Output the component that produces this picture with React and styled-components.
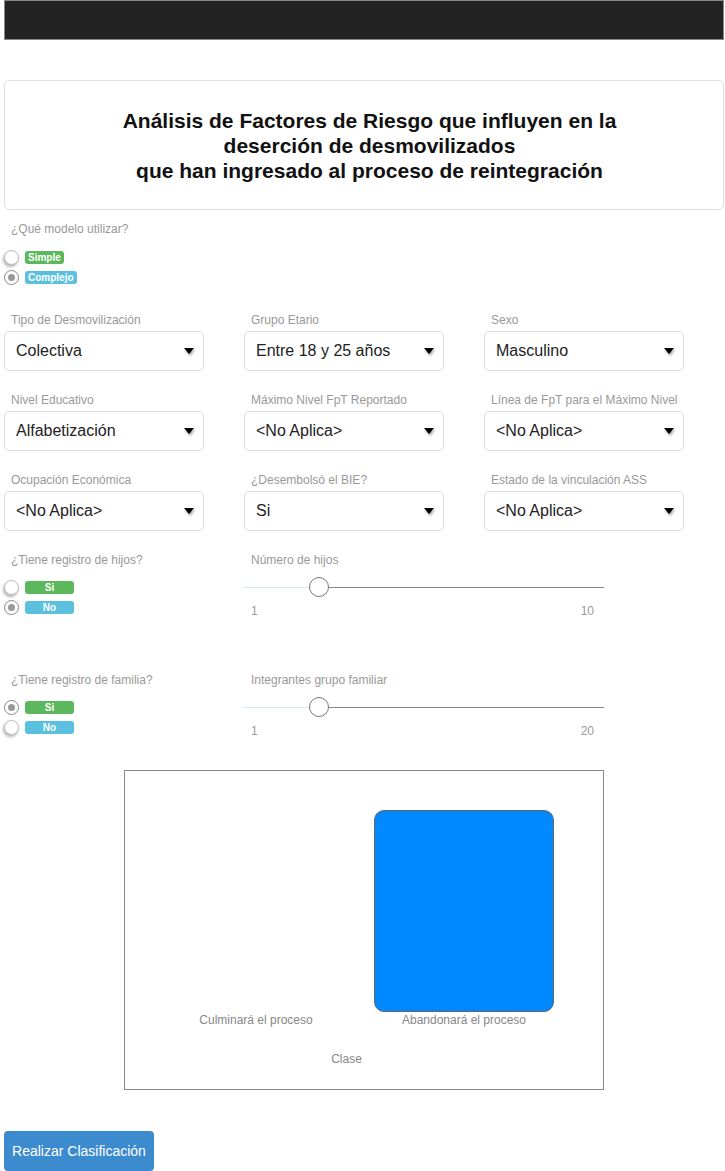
import React from "react";
import styled, { createGlobalStyle } from "styled-components";

const GlobalStyle = createGlobalStyle`
  body {
    margin: 0;
    background: #fff;
    font-family: "Liberation Sans", Arial, sans-serif;
  }
`;

const Page = styled.div`
  width: 720px;
  padding: 0 1px 0 4px;
`;

const TopBar = styled.header`
  height: 38px;
  background: #222;
  border: 1px solid #888;
`;

const TitleCard = styled.section`
  margin-top: 40px;
  height: 128px;
  border: 1px solid #ddd;
  border-radius: 5px;
  display: flex;
  align-items: center;
  justify-content: center;
  padding-left: 11px;
`;

const Title = styled.h1`
  margin: 0;
  font-size: 21px;
  line-height: 25px;
  font-weight: bold;
  text-align: center;
  color: #111;
`;

const Label = styled.div`
  font-size: 12px;
  line-height: 14px;
  color: #999;
  padding-left: 7px;
  white-space: nowrap;
`;

const ModelBlock = styled.div`
  margin-top: 12px;
`;

const RadioList = styled.div`
  display: flex;
  flex-direction: column;
  gap: 6px;
  margin-top: ${props => props.top || 13}px;
`;

const RadioRow = styled.label`
  display: flex;
  align-items: center;
  gap: 6px;
  height: 14px;
`;

const RadioDot = styled.span`
  width: 13px;
  height: 13px;
  border-radius: 50%;
  border: 1px solid ${props => (props.checked ? "#888" : "#bbb")};
  background: #fff;
  box-shadow: ${props => (props.checked ? "none" : "-1px 2px 3px rgba(0,0,0,0.3)")};
  display: flex;
  align-items: center;
  justify-content: center;
  flex-shrink: 0;

  &::after {
    content: "";
    width: 7px;
    height: 7px;
    border-radius: 50%;
    background: ${props => (props.checked ? "#999" : "transparent")};
  }
`;

const Badge = styled.span`
  display: inline-block;
  background: ${props => (props.kind === "info" ? "#5bc0de" : "#5cb85c")};
  color: #fff;
  font-size: 10px;
  font-weight: bold;
  line-height: 13px;
  height: 13px;
  border-radius: 3px;
  padding: 0 3px;
  text-align: center;
  min-width: ${props => (props.wide ? "43px" : "0")};
`;

const SelectGrid = styled.div`
  display: grid;
  grid-template-columns: repeat(3, 200px);
  column-gap: 40px;
  row-gap: 22px;
  margin-top: 29px;
`;

const Field = styled.div`
  display: flex;
  flex-direction: column;
  gap: 4px;
`;

const SelectBox = styled.div`
  height: 38px;
  border: 1px solid #ddd;
  border-radius: 5px;
  display: flex;
  align-items: center;
  justify-content: space-between;
  padding: 0 9px 0 11px;
  font-size: 16px;
  color: #222;
`;

const Caret = styled.span`
  width: 0;
  height: 0;
  border-left: 5px solid transparent;
  border-right: 5px solid transparent;
  border-top: 6px solid #000;
  filter: drop-shadow(1px 2px 1px rgba(0, 0, 0, 0.35));
`;

const OptionRow = styled.div`
  display: grid;
  grid-template-columns: 200px 360px;
  column-gap: 40px;
  margin-top: ${props => props.top}px;
  height: ${props => props.height}px;
`;

const SliderWrap = styled.div`
  display: flex;
  flex-direction: column;
`;

const Track = styled.div`
  height: 20px;
  margin-top: 10px;
  display: flex;
  align-items: center;
`;

const TrackFill = styled.span`
  width: ${props => props.width}px;
  height: 1px;
  background: #d4e6f7;
`;

const TrackRest = styled.span`
  flex: 1;
  height: 1px;
  background: #888;
`;

const Thumb = styled.span`
  width: 18px;
  height: 18px;
  border-radius: 50%;
  border: 1px solid #777;
  background: #fff;
  flex-shrink: 0;
`;

const Ticks = styled.div`
  display: flex;
  justify-content: space-between;
  font-size: 12px;
  line-height: 14px;
  color: #999;
  padding: 0 10px 0 7px;
  margin-top: 7px;
`;

const Chart = styled.div`
  margin: 11px 0 0 120px;
  width: 480px;
  height: 320px;
  border: 1px solid #888;
  display: flex;
  flex-direction: column;
  padding-top: 39px;
  box-sizing: border-box;
`;

const Plot = styled.div`
  display: grid;
  grid-template-columns: 208px 208px;
  padding-left: 27px;
  height: 200px;
  align-items: end;
`;

const Bar = styled.div`
  justify-self: center;
  width: 178px;
  height: ${props => props.height}px;
  background: #0088ff;
  border: 1px solid #666;
  border-radius: 10px;
`;

const AxisLabels = styled.div`
  display: grid;
  grid-template-columns: 208px 208px;
  padding-left: 27px;
  margin-top: 3px;
  font-size: 12px;
  line-height: 14px;
  color: #888;
  text-align: center;
`;

const AxisTitle = styled.div`
  margin-top: 25px;
  font-size: 12px;
  line-height: 14px;
  color: #888;
  text-align: center;
  padding-right: 35px;
`;

const Button = styled.button`
  margin-top: 41px;
  width: 150px;
  height: 40px;
  border: 0;
  border-radius: 4px;
  background: #3d8bcf;
  color: #fff;
  font-family: "Liberation Sans", Arial, sans-serif;
  font-size: 14px;
  display: block;
`;

const selects = [
  ["Tipo de Desmovilización", "Colectiva"],
  ["Grupo Etario", "Entre 18 y 25 años"],
  ["Sexo", "Masculino"],
  ["Nivel Educativo", "Alfabetización"],
  ["Máximo Nivel FpT Reportado", "<No Aplica>"],
  ["Línea de FpT para el Máximo Nivel", "<No Aplica>"],
  ["Ocupación Económica", "<No Aplica>"],
  ["¿Desembolsó el BIE?", "Si"],
  ["Estado de la vinculación ASS", "<No Aplica>"],
];

function YesNo({ question, checked }) {
  return (
    <div>
      <Label>{question}</Label>
      <RadioList>
        <RadioRow>
          <RadioDot checked={checked === "si"} />
          <Badge wide>Si</Badge>
        </RadioRow>
        <RadioRow>
          <RadioDot checked={checked === "no"} />
          <Badge wide kind="info">No</Badge>
        </RadioRow>
      </RadioList>
    </div>
  );
}

function Slider({ label, min, max, fill }) {
  return (
    <SliderWrap>
      <Label>{label}</Label>
      <Track>
        <TrackFill width={fill} />
        <Thumb />
        <TrackRest />
      </Track>
      <Ticks>
        <span>{min}</span>
        <span>{max}</span>
      </Ticks>
    </SliderWrap>
  );
}

export default function App() {
  return (
    <Page>
      <GlobalStyle />
      <TopBar />
      <TitleCard>
        <Title>
          Análisis de Factores de Riesgo que influyen en la
          <br />
          deserción de desmovilizados
          <br />
          que han ingresado al proceso de reintegración
        </Title>
      </TitleCard>

      <ModelBlock>
        <Label>¿Qué modelo utilizar?</Label>
        <RadioList top={14}>
          <RadioRow>
            <RadioDot />
            <Badge>Simple</Badge>
          </RadioRow>
          <RadioRow>
            <RadioDot checked />
            <Badge kind="info">Complejo</Badge>
          </RadioRow>
        </RadioList>
      </ModelBlock>

      <SelectGrid>
        {selects.map(([label, value]) => (
          <Field key={label}>
            <Label>{label}</Label>
            <SelectBox>
              <span>{value}</span>
              <Caret />
            </SelectBox>
          </Field>
        ))}
      </SelectGrid>

      <OptionRow top={22} height={86}>
        <YesNo question="¿Tiene registro de hijos?" checked="no" />
        <Slider label="Número de hijos" min={1} max={10} fill={65} />
      </OptionRow>

      <OptionRow top={34} height={86}>
        <YesNo question="¿Tiene registro de familia?" checked="si" />
        <Slider label="Integrantes grupo familiar" min={1} max={20} fill={65} />
      </OptionRow>

      <Chart>
        <Plot>
          <div />
          <Bar height={200} />
        </Plot>
        <AxisLabels>
          <span>Culminará el proceso</span>
          <span>Abandonará el proceso</span>
        </AxisLabels>
        <AxisTitle>Clase</AxisTitle>
      </Chart>

      <Button>Realizar Clasificación</Button>
    </Page>
  );
}
